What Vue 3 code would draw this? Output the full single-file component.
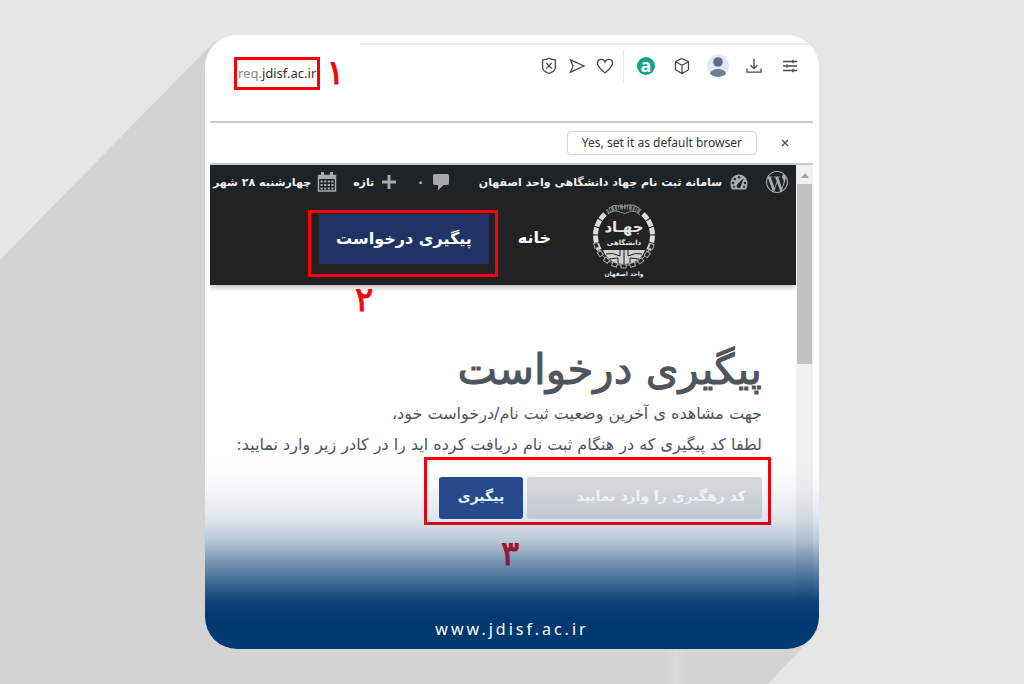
<script setup>
import { ref } from 'vue';

const trackingCode = ref('');
const showDefaultBar = ref(true);

// the teeth around the lower half of the emblem
const teeth = [18, 36, 54, 72, 90, 108, 126, 144, 162];
</script>

<template>
    <div class="stage">
        <div class="card">
            <div class="browser">
                <div class="tab-line"></div>

                <div class="address-row">
                    <div class="address highlight"><span class="sub">req.</span>jdisf.ac.ir</div>
                    <span class="step">۱</span>

                    <div class="tools">
                        <button class="tool small" aria-label="Shield">
                            <svg width="16" height="18" viewBox="0 0 16 18" class="line">
                                <path d="M8 1.3C6 2.5 4 2.8 1.6 2.8v7.4c0 3 2.8 5 6.4 6.3 3.6-1.300 6.400-3.300 6.400-6.300V2.800C12 2.800 10 2.500 8 1.300z" />
                                <path d="M5.200 6l5.600 5.600M10.800 6l-5.600 5.600" />
                            </svg>
                        </button>
                        <button class="tool small" aria-label="Send">
                            <svg width="16" height="16" viewBox="0 0 16 16" class="line">
                                <path d="M1.500 1.800L15 8 1.500 14.200 4 8z" />
                            </svg>
                        </button>
                        <button class="tool small" aria-label="Favourite">
                            <svg width="18" height="16" viewBox="0 0 18 16" class="line">
                                <path d="M9 14.800C4.500 11 1.400 8.500 1.400 5.200c0-4.600 6-5.200 7.600-1.200 1.600-4 7.600-3.400 7.600 1.200 0 3.300-3.100 5.800-7.600 9.600z" />
                            </svg>
                        </button>
                        <span class="divider"></span>
                        <button class="tool" aria-label="Alexa">
                            <span class="alexa">a</span>
                        </button>
                        <button class="tool" aria-label="Extensions">
                            <svg width="16" height="18" viewBox="0 0 16 18" class="line">
                                <path d="M8 1.500l6.500 3.200v8L8 16.500l-6.500-3.800v-8zM1.500 4.700L8 8.300l6.500-3.600M8 8.300v8.200" />
                            </svg>
                        </button>
                        <button class="tool" aria-label="Profile">
                            <svg width="22" height="24" viewBox="0 0 22 24">
                                <circle cx="11" cy="11.500" r="11" fill="#e0eaf3" />
                                <circle cx="11" cy="8" r="4.800" fill="#5d7085" />
                                <path d="M3 19.500c1.500-6 14.500-6 16 0-3 4.500-13 4.500-16 0z" fill="#6a8199" />
                            </svg>
                        </button>
                        <button class="tool" aria-label="Downloads">
                            <svg width="16" height="16" viewBox="0 0 16 16" class="line">
                                <path d="M8 1v9.500M4.500 7.200L8 10.700l3.500-3.500M1 10.500v3.700h14v-3.700" />
                            </svg>
                        </button>
                        <button class="tool" aria-label="Easy setup">
                            <svg width="16" height="14" viewBox="0 0 16 14" class="line">
                                <path d="M1 2.500h14M1 7h14M1 11.500h14M11 .8v3.400M5 5.300v3.400M11 9.800v3.400" />
                            </svg>
                        </button>
                    </div>
                </div>

                <div class="default-bar">
                    <template v-if="showDefaultBar">
                        <button class="set-default">Yes, set it as default browser</button>
                        <button class="close" aria-label="Close" @click="showDefaultBar = false">
                            <svg width="8" height="8" viewBox="0 0 8 8" class="line">
                                <path d="M1 1l6 6M7 1L1 7" />
                            </svg>
                        </button>
                    </template>
                </div>

                <div class="viewport">
                    <div class="page" dir="rtl" lang="fa">
                        <nav class="admin-bar">
                            <a href="#" class="wp" aria-label="WordPress">
                                <svg width="22" height="22" viewBox="0 0 24 24" fill="#a7aaad">
                                    <path d="M21.469 6.825c.84 1.537 1.318 3.3 1.318 5.175 0 3.979-2.156 7.456-5.363 9.325l3.295-9.527c.615-1.54.82-2.771.82-3.864 0-.405-.026-.78-.07-1.11m-7.981.105c.647-.03 1.232-.105 1.232-.105.582-.075.514-.93-.067-.899 0 0-1.755.135-2.88.135-1.064 0-2.85-.15-2.85-.15-.585-.03-.661.855-.075.885 0 0 .54.061 1.125.09l1.68 4.605-2.37 7.08L5.354 6.9c.649-.03 1.234-.1 1.234-.1.585-.075.516-.93-.065-.896 0 0-1.746.138-2.874.138-.2 0-.438-.008-.69-.015C4.911 3.15 8.235 1.215 12 1.215c2.809 0 5.365 1.072 7.286 2.833-.046-.003-.091-.009-.141-.009-1.06 0-1.812.923-1.812 1.914 0 .89.513 1.643 1.06 2.531.411.72.89 1.643.89 2.977 0 .915-.354 1.994-.821 3.479l-1.075 3.585-3.9-11.61.001.014zM12 22.784c-1.059 0-2.081-.153-3.048-.437l3.237-9.406 3.315 9.087c.024.053.05.101.078.149-1.12.393-2.325.609-3.582.609M1.211 12c0-1.564.336-3.05.935-4.39L7.29 21.709C3.694 19.96 1.212 16.271 1.211 12M12 0C5.385 0 0 5.385 0 12s5.385 12 12 12 12-5.385 12-12S18.615 0 12 0" />
                                </svg>
                            </a>
                            <a href="#" class="site">
                                <svg width="18" height="16" viewBox="0 0 18 16">
                                    <path d="M2 15.500C-2 8 2.500.5 9 .5s11 7.500 7 15z" fill="#a7aaad" />
                                    <g fill="#1d2327">
                                        <circle cx="9" cy="3.200" r="1.200" />
                                        <circle cx="4.800" cy="5" r="1.200" />
                                        <circle cx="3" cy="9" r="1.200" />
                                        <circle cx="15" cy="9" r="1.200" />
                                        <circle cx="4" cy="12.800" r="1" />
                                        <circle cx="14" cy="12.800" r="1" />
                                        <path d="M13.800 4L11 11.500a2.200 2.200 0 1 1-3.300-1.600z" />
                                    </g>
                                </svg>
                                <span>سامانه ثبت نام جهاد دانشگاهی واحد اصفهان</span>
                            </a>
                            <a href="#" class="comments">
                                <svg width="16" height="18" viewBox="0 0 16 18">
                                    <path d="M2 1h12q2 0 2 2v7q0 2-2 2h-3.500L5 17.500V12H2q-2 0-2-2V3q0-2 2-2z" fill="#a7aaad" />
                                </svg>
                                <span class="count">۰</span>
                            </a>
                            <a href="#" class="new">
                                <svg width="14" height="14" viewBox="0 0 14 14">
                                    <path d="M5.500 0h3v5.500H14v3H8.500V14h-3V8.500H0v-3h5.500z" fill="#a7aaad" />
                                </svg>
                                <span>تازه</span>
                            </a>
                            <a href="#" class="date">
                                <svg width="20" height="20" viewBox="0 0 20 20">
                                    <path d="M1.500 3.500h17v15.500h-17z" fill="none" stroke="#a7aaad" stroke-width="1.500" />
                                    <path d="M1 3h18v4H1z" fill="#a7aaad" />
                                    <path d="M5.500 0v5M14.500 0v5" stroke="#a7aaad" stroke-width="3" />
                                    <path d="M3.500 9.500h13M3.500 13h13M3.500 16.500h13" stroke="#a7aaad" stroke-width="2" stroke-dasharray="2.200 1.400" />
                                </svg>
                                <span>چهارشنبه ۲۸ شهر</span>
                            </a>
                        </nav>

                        <header class="site-header">
                            <a href="#" class="logo" aria-label="جهاد دانشگاهی واحد اصفهان">
                                <svg width="66" height="76" viewBox="0 0 66 76">
                                    <g fill="none" stroke="#dcdcdc">
                                        <path d="M14 11a29 29 0 0 0-5 37M52 11a29 29 0 0 1 5 37" stroke-width="5" stroke-dasharray="7 1" />
                                        <path d="M16 9a30 30 0 0 1 34 0" stroke="#777" stroke-width="5" stroke-dasharray="2 1 1 1 3 1" />
                                        <path d="M18 5q5-4 10-2t10-1q5-1 10 3M17 11q6-5 12-2t10-1q6-1 10 4" stroke="#999" />
                                        <path d="M7 45a28 28 0 0 0 52 0" stroke="#aaa" />
                                    </g>
                                    <g fill="#222" stroke="#aaa">
                                        <rect
                                            v-for="angle in teeth"
                                            :key="angle"
                                            x="60"
                                            y="32"
                                            width="4"
                                            height="5"
                                            :transform="`rotate(${angle} 33 34)`"
                                        />
                                    </g>
                                    <path d="M12 47h42c-3 9-11 14-21 14s-18-5-21-14z" fill="#cfcfcf" />
                                    <path d="M33 47v14M29 47v6q-8-4-14-2M37 47v6q8-4 14-2M27 60v-5l-9 1M39 60v-5l9 1" stroke="#222" fill="none" />
                                    <text x="33" y="29" class="logo-main">جهـاد</text>
                                    <text x="33" y="42" class="logo-mid">دانشگاهی</text>
                                    <text x="33" y="73" class="logo-small">واحد اصفهان</text>
                                </svg>
                            </a>
                            <a href="#" class="menu-item">خانه</a>
                            <div class="menu-highlight highlight">
                                <a href="#" class="menu-item active">پیگیری درخواست</a>
                                <span class="step step-two">۲</span>
                            </div>
                        </header>

                        <main class="content">
                            <h1>پیگیری درخواست</h1>
                            <p>جهت مشاهده ی آخرین وضعیت ثبت نام/درخواست خود،</p>
                            <p>لطفا کد پیگیری که در هنگام ثبت نام دریافت کرده اید را در کادر زیر وارد نمایید:</p>
                            <form class="tracking highlight" @submit.prevent>
                                <input v-model="trackingCode" type="text" aria-label="کد رهگیری" placeholder="کد رهگیری را وارد نمایید">
                                <button type="submit">پیگیری</button>
                                <span class="step step-three">۳</span>
                            </form>
                        </main>
                    </div>
                    <div class="scrollbar">
                        <span class="arrow"></span>
                        <span class="thumb"></span>
                    </div>
                </div>
            </div>

            <div class="fade"></div>
            <footer class="site-url">www.jdisf.ac.ir</footer>
        </div>
    </div>
</template>

<style>
body {
    margin: 0;
    background: #e6e6e6;
}
</style>

<style scoped>
.stage {
    position: relative;
    box-sizing: border-box;
    min-height: 100vh;
    padding: 35px 205px;
    background: #e6e6e6;
    font-family: "DejaVu Sans", sans-serif;
}

/* long shadow falling to the bottom left */
.stage::before {
    content: "";
    position: absolute;
    inset: 0;
    background:
        linear-gradient(90deg, transparent 65%, #d9d9d9 66%, transparent 67%),
        #d3d3d3;
    clip-path: polygon(21% 6%, 0 38%, 0 100%, 75% 100%, 80% 92%);
}

.card {
    position: relative;
    overflow: hidden;
    border-radius: 32px;
    background: #fff;
}

.browser {
    padding: 0 6px 0 5px;
}

.tab-line {
    height: 8px;
    margin-left: 150px;
    border-bottom: 2px solid #ececec;
}

.highlight {
    border: 3px solid #fb0007;
}

.address-row {
    display: flex;
    align-items: flex-start;
    padding: 5px 5px 31px 24px;
    border-bottom: 2px solid #c5cad5;
}

.address {
    margin-top: 7px;
    padding: 0 1px;
    font: 13px/27px "Noto Sans", sans-serif;
    color: #333;
}

.sub {
    color: #7d8894;
}

.step {
    font-size: 34px;
    line-height: 34px;
    color: #fb0007;
    -webkit-text-stroke: 1px currentColor;
}

.address + .step {
    margin: 5px 0 0 6px;
}

.tools {
    display: flex;
    align-items: center;
    margin-left: auto;
}

.tool {
    display: flex;
    align-items: center;
    justify-content: center;
    width: 36px;
    height: 28px;
    padding: 0;
    border: none;
    background: transparent;
    cursor: pointer;
}

.tool.small {
    width: 28px;
}

.line {
    fill: none;
    stroke: #454a50;
    stroke-width: 1.3;
}

.divider {
    width: 1px;
    height: 32px;
    margin: 0 4px;
    background: #e8e8e8;
}

.alexa {
    width: 18px;
    height: 18px;
    border-radius: 50%;
    background: #0fa58a;
    color: #fff;
    font: bold 18px/16px "Noto Sans", sans-serif;
}

.default-bar {
    display: flex;
    align-items: center;
    justify-content: flex-end;
    height: 40px;
    padding-right: 20px;
    border-bottom: 2px solid #c5cad5;
}

.set-default {
    height: 24px;
    padding: 0 14px;
    border: 1px solid #cfd3d9;
    border-radius: 4px;
    background: #fff;
    font: 12px/20px "Noto Sans", sans-serif;
    color: #333;
    cursor: pointer;
}

.close {
    display: flex;
    margin-left: 20px;
    padding: 4px;
    border: none;
    background: transparent;
    cursor: pointer;
}

.viewport {
    display: flex;
}

.page {
    flex: 1;
    min-width: 0;
    overflow: hidden;
}

.admin-bar {
    display: flex;
    align-items: center;
    height: 34px;
    padding-right: 8px;
    background: #1d2327;
    font-size: 11px;
    font-weight: bold;
    white-space: nowrap;
}

.admin-bar a {
    display: flex;
    flex-shrink: 0;
    align-items: center;
    gap: 8px;
    color: #f0f0f1;
    text-decoration: none;
}

.admin-bar .wp {
    margin-left: 18px;
}

.admin-bar .site {
    margin-left: 30px;
}

.admin-bar .comments {
    margin-left: 20px;
}

.admin-bar .new {
    margin-left: 16px;
}

.admin-bar .date {
    gap: 6px;
}

.admin-bar .count {
    font-size: 14px;
    color: #a7aaad;
}

.site-header {
    display: flex;
    align-items: flex-start;
    height: 86px;
    padding-right: 139px;
    background: #222;
    box-shadow: 0 2px 6px rgba(0, 0, 0, 0.3);
}

.logo {
    margin-top: 4px;
}

.logo svg {
    display: block;
}

.logo text {
    fill: #e6e6e6;
    font-weight: bold;
    text-anchor: middle;
}

.logo-main {
    font-size: 15px;
}

.logo-mid {
    font-size: 7px;
}

.logo-small {
    font-size: 6px;
}

.menu-item {
    margin: 14px 40px 0 20px;
    font-size: 16px;
    line-height: 50px;
    font-weight: bold;
    color: #fff;
    text-decoration: none;
}

.menu-highlight {
    position: relative;
    margin-top: 11px;
    padding: 1px 6px 10px 8px;
}

.menu-item.active {
    display: block;
    margin: 0;
    padding: 0 17px;
    background: #203364;
}

.step-two {
    position: absolute;
    top: 100%;
    left: 44px;
    padding-top: 8px;
}

.content {
    padding: 56px 25px 74px 0;
    color: #50545c;
}

h1 {
    margin: 0;
    padding: 0 9px 0 0;
    font-size: 42px;
    line-height: 57px;
    font-weight: normal;
    -webkit-text-stroke: 1px currentColor;
}

p {
    margin: 0;
    padding-right: 9px;
    font-size: 16px;
    line-height: 31px;
    white-space: nowrap;
}

.tracking {
    position: relative;
    display: flex;
    gap: 4px;
    width: fit-content;
    margin-top: -3px;
    padding: 17px 6px 3px 12px;
}

.tracking input {
    box-sizing: border-box;
    width: 235px;
    height: 42px;
    padding: 0 16px 4px;
    border: none;
    border-radius: 3px;
    background: #dcdddf;
    font: bold 14px "DejaVu Sans", sans-serif;
}

.tracking input::placeholder {
    color: #fff;
    opacity: 1;
}

.tracking button {
    width: 84px;
    height: 42px;
    padding: 0 0 4px;
    border: none;
    border-radius: 3px;
    background: #294b8e;
    color: #fff;
    font: bold 14px "DejaVu Sans", sans-serif;
    cursor: pointer;
}

.step-three {
    position: absolute;
    top: 100%;
    left: 74px;
    padding-top: 14px;
}

.scrollbar {
    display: flex;
    flex-direction: column;
    align-items: center;
    width: 17px;
    background: #f1f1f1;
}

.arrow {
    margin: 8px 0 6px;
    border: 4px solid transparent;
    border-top: none;
    border-bottom: 5px solid #a3a3a3;
}

.thumb {
    width: 15px;
    height: 180px;
    background: #c1c1c1;
}

.fade {
    position: absolute;
    right: 0;
    bottom: 0;
    left: 0;
    height: 200px;
    background: linear-gradient(
        rgba(0, 56, 112, 0) 5%,
        rgba(0, 56, 112, 0.04) 20%,
        rgba(0, 56, 112, 0.13) 35%,
        rgba(0, 56, 112, 0.28) 46%,
        rgba(0, 56, 112, 0.52) 56%,
        rgba(0, 56, 112, 0.74) 66%,
        rgba(0, 56, 112, 0.94) 76%,
        #003870 86%
    );
    pointer-events: none;
}

.site-url {
    position: relative;
    padding: 20px 0 10px;
    font: 16px/20px "Noto Sans", sans-serif;
    letter-spacing: 3px;
    text-align: center;
    color: #fff;
}
</style>
